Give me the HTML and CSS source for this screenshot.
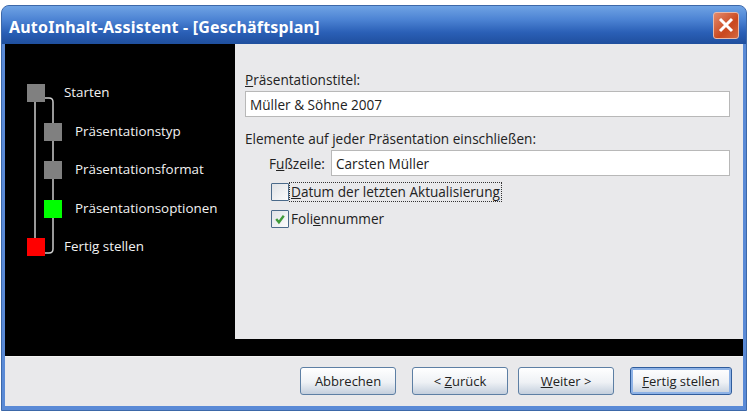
FILE: index.html
```html
<!DOCTYPE html>
<html lang="de">
<head>
    <meta charset="UTF-8">
    <title>AutoInhalt-Assistent</title>
    <link rel="stylesheet" href="styles.css">
</head>
<body>
    <div class="window">
        <div class="titlebar">
            <span class="title">AutoInhalt-Assistent - [Geschäftsplan]</span>
            <div class="close">
                <svg width="18" height="18" viewBox="0 0 18 18"><path d="M3 3L15 15M15 3L3 15" stroke="#fff" stroke-width="3" fill="none"/></svg>
            </div>
        </div>
        <div class="client">
            <div class="main">
                <!-- Step list on the left -->
                <div class="steps">
                    <svg class="step-lines" width="70" height="200" viewBox="0 0 70 200">
                        <path d="M30 7V154" stroke="#ccc" stroke-width="1.5" fill="none"/>
                        <path d="M40 7H44Q48 7 48 11V158Q48 162 44 162H40" stroke="#ccc" stroke-width="1.5" fill="none"/>
                    </svg>
                    <div class="step top gray"><span class="box"></span>Starten</div>
                    <div class="step sub gray"><span class="box"></span>Präsentationstyp</div>
                    <div class="step sub gray"><span class="box"></span>Präsentationsformat</div>
                    <div class="step sub green"><span class="box"></span>Präsentationsoptionen</div>
                    <div class="step top red"><span class="box"></span>Fertig stellen</div>
                </div>
                <!-- Options panel -->
                <div class="panel">
                    <div class="form">
                        <label class="field-label"><u>P</u>räsentationstitel:</label>
                        <input class="text-input" type="text" value="Müller &amp; Söhne 2007">
                        <div class="section-label">Elemente auf jeder Präsentation einschließen:</div>
                        <div class="footer-row">
                            <label>F<u>u</u>ßzeile:</label>
                            <input class="text-input" type="text" value="Carsten Müller">
                        </div>
                        <div class="check-row">
                            <span class="check"></span>
                            <span class="focus"><u>D</u>atum der letzten Aktualisierung</span>
                        </div>
                        <div class="check-row second">
                            <span class="check">
                                <svg width="14" height="14" viewBox="0 0 13 13"><path d="M3 6.5L5.5 9.5L10 3.5" stroke="#3f9a3a" stroke-width="2.2" fill="none"/></svg>
                            </span>
                            <span class="plain">Foli<u>e</u>nnummer</span>
                        </div>
                    </div>
                </div>
            </div>
            <div class="buttons">
                <button>Abbrechen</button>
                <button class="back">&lt; <u>Z</u>urück</button>
                <button><u>W</u>eiter &gt;</button>
                <button class="default"><u>F</u>ertig stellen</button>
            </div>
        </div>
    </div>
</body>
</html>
```

FILE: styles.css
```css
body {
    margin: 0;
    background: #fff;
    font-family: "Open Sans", "Noto Sans", sans-serif;
    font-size: 13.6px;
    color: #222;
    overflow: hidden;
}
.window {
    margin: 5px 3px 0 1px;
    height: 406px;
    box-sizing: border-box;
    display: flex;
    flex-direction: column;
    background: #5a8ad6;
    border-radius: 8px 8px 0 0;
    border: 1px solid #3d68a8;
}
.titlebar {
    height: 38px;
    flex-shrink: 0;
    display: flex;
    align-items: center;
    justify-content: space-between;
    padding: 0 6px 0 7px;
    border-radius: 7px 7px 0 0;
    background: linear-gradient(#6fa3e4 0%, #4d84d4 35%, #2a5fb6 70%, #1f4f9e 100%);
}
.title {
    padding-top: 4px;
    color: #fff;
    font-family: "Noto Sans", sans-serif;
    font-weight: bold;
    font-size: 16px;
    letter-spacing: 0.2px;
}
.close {
    width: 24px;
    height: 25px;
    margin-right: 1px;
    display: flex;
    align-items: center;
    justify-content: center;
    border: 1px solid #e9b9a8;
    border-radius: 3px;
    background: linear-gradient(135deg, #e58a6c, #c9481f 60%, #d4683f);
}
.client {
    flex: 1;
    display: flex;
    flex-direction: column;
    margin: 0 3px 4px 3px;
    background: #e9e9eb;
}
.main {
    height: 312px;
    display: flex;
    background: #000;
}
.steps {
    position: relative;
    width: 230px;
    flex-shrink: 0;
    padding-top: 40px;
    box-sizing: border-box;
    color: #f2f2f2;
}
.step-lines {
    position: absolute;
    left: 0;
    top: 47px;
}
.step {
    position: relative;
    height: 38.5px;
    display: flex;
    align-items: flex-start;
    font-size: 13.4px;
    line-height: 17px;
}
.step.top {
    padding-left: 22px;
}
.step.sub {
    padding-left: 39px;
}
.box {
    width: 18px;
    height: 18px;
    margin-right: 13px;
    flex-shrink: 0;
}
.gray .box {
    background: #808080;
}
.green .box {
    background: #00ff00;
}
.red .box {
    background: #ff0000;
}
.top .box {
    margin-right: 19px;
}
.panel {
    flex: 1;
    height: 295px;
    background: #e9e9eb;
    padding: 26px 13px 0 10px;
    box-sizing: border-box;
}
.field-label {
    display: block;
    line-height: 19px;
    margin-bottom: 2px;
}
.text-input {
    display: block;
    width: 100%;
    height: 26px;
    box-sizing: border-box;
    padding: 0 4px;
    border: 1px solid #b8b8b8;
    background: #fff;
    font: inherit;
    color: #222;
}
.section-label {
    margin-top: 12px;
    line-height: 19px;
}
.footer-row {
    display: flex;
    align-items: center;
    gap: 6px;
    margin-top: 2px;
    padding-left: 24px;
}
.footer-row label {
    flex-shrink: 0;
    width: 56px;
    white-space: nowrap;
}
.check-row {
    display: flex;
    align-items: center;
    margin-top: 6px;
    padding-left: 26px;
}
.check-row.second {
    margin-top: 7px;
}
.check {
    width: 16px;
    height: 16px;
    flex-shrink: 0;
    display: flex;
    align-items: center;
    justify-content: center;
    border: 1px solid #4a6a8a;
    border-radius: 1px;
    background: linear-gradient(135deg, #dfe2e6, #fcfcfc);
}
.focus {
    padding: 0 1px;
    border: 1px dotted #333;
    line-height: 18px;
}
.plain {
    margin-left: 1px;
    padding: 0 1px;
}
.buttons {
    flex: 1;
    display: flex;
    justify-content: flex-end;
    gap: 10px;
    padding: 10px 11px 0 0;
    border-top: 1px solid #f4f4f4;
}
button {
    width: 96px;
    height: 28px;
    padding: 0;
    font: inherit;
    font-size: 13px;
    color: #222;
    border: 1px solid #5d7fa4;
    border-radius: 3px;
    background: linear-gradient(#ffffff, #eef1f5 55%, #c4cfdd);
}
button.back {
    margin-left: 6px;
}
button.default {
    width: 102px;
    margin-left: 6px;
    box-shadow: inset 0 0 0 2px #8db2e6;
    border-color: #2f5c9c;
}
```
